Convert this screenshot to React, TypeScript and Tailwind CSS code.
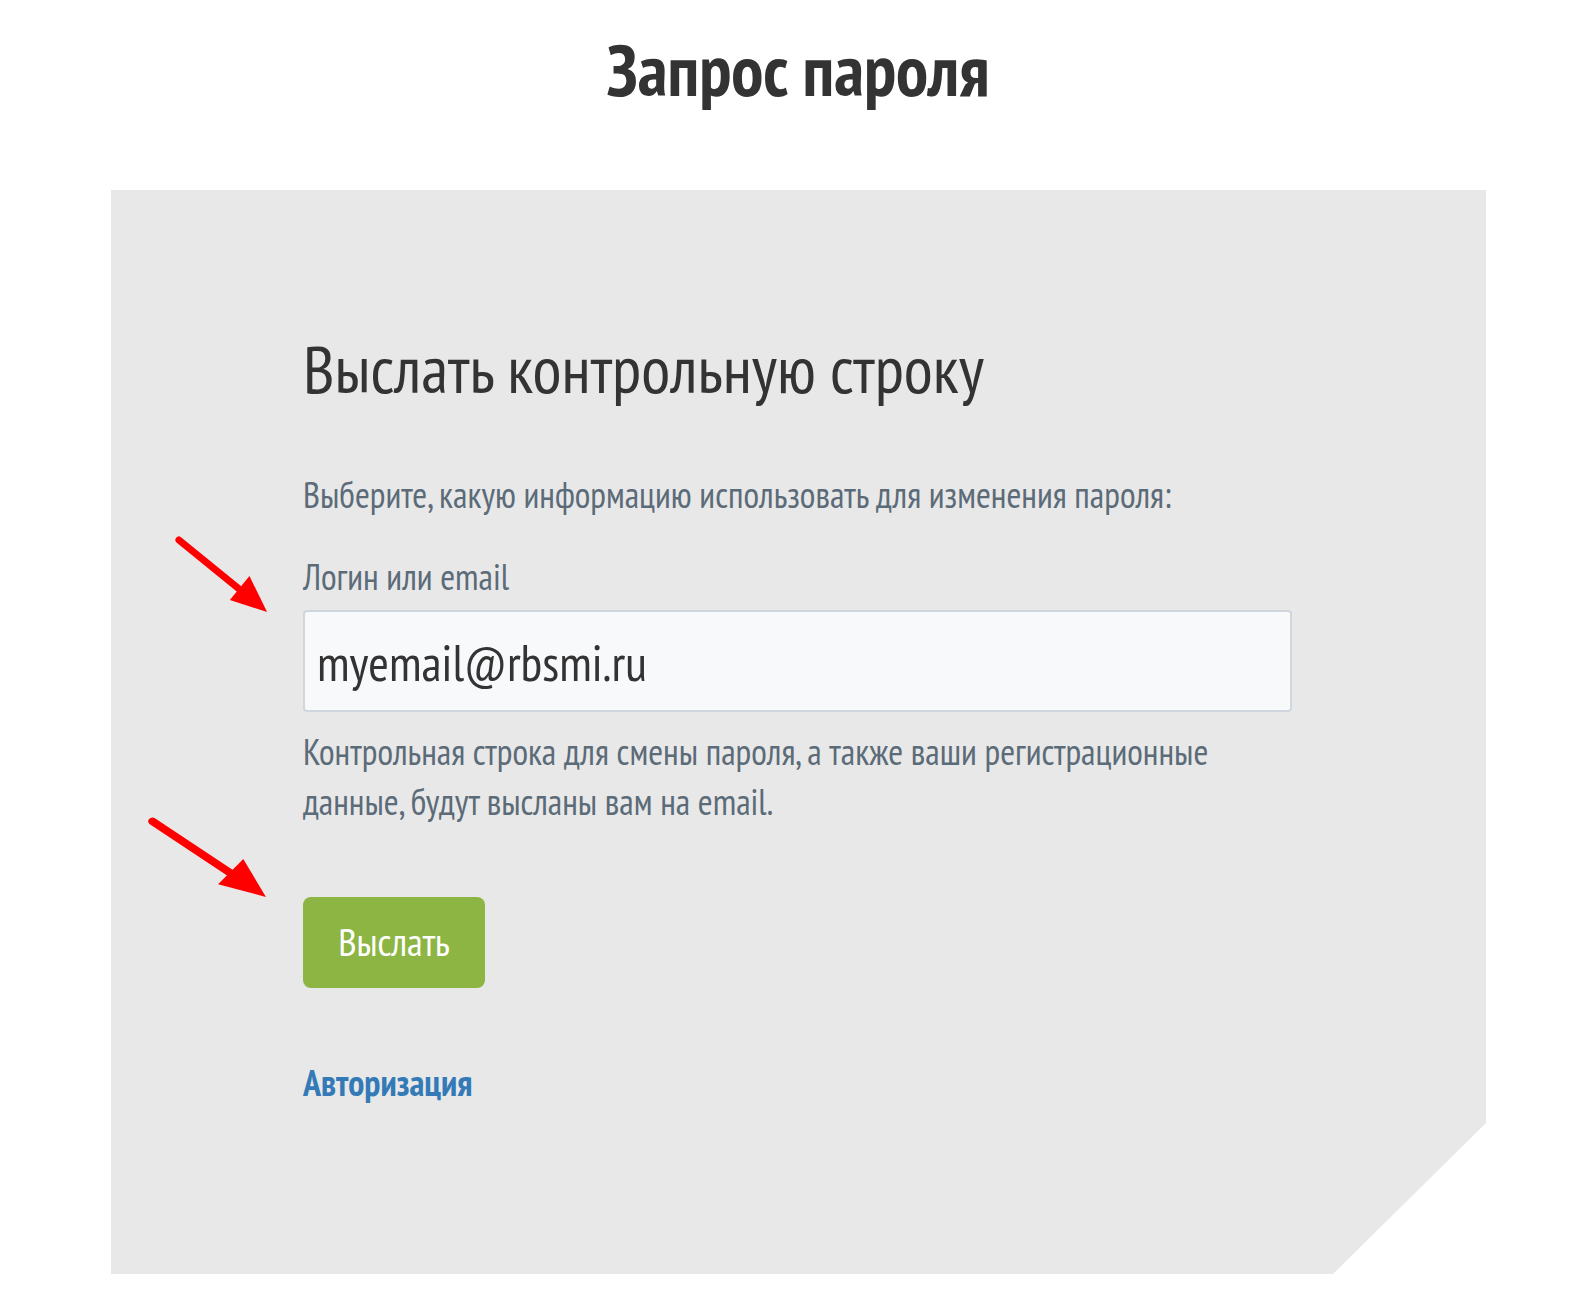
const narrow = 'font-["PT_Sans_Narrow","Liberation_Sans_Narrow","DejaVu_Sans_Condensed",sans-serif]';

const RedArrow = ({ className }: { className: string }) => (
  <svg className={className} viewBox="0 0 100 80" fill="none" preserveAspectRatio="none">
    <line x1="6" y1="6" x2="70" y2="57" stroke="#ff0000" strokeWidth="7" strokeLinecap="round" />
    <polygon points="96,78 58,66 78,42" fill="#ff0000" />
  </svg>
);

export default function App() {
  return (
    <div className={`min-h-[1311px] bg-white text-[#333] ${narrow}`}>
      <h1 className="pl-[16px] pt-[30px] text-center text-[72px] font-bold leading-[80px] text-[#333]">Запрос пароля</h1>

      <div className="relative ml-[111px] mt-[80px] h-[1084px] w-[1375px] bg-[#e8e8e8] [clip-path:polygon(0_0,100%_0,100%_933px,1222px_100%,0_100%)]">
        <RedArrow className="absolute left-[62px] top-[344px] h-[80px] w-[98px]" />
        <RedArrow className="absolute left-[34px] top-[625px] h-[84px] w-[126px]" />

        <div className="pl-[192px] pt-[138px]">
          <h2 className="text-[67px] font-normal leading-[80px] text-[#333]">Выслать контрольную строку</h2>

          <p className="mt-[62px] text-[36px] leading-[50px] text-[#5b6b78]">
            Выберите, какую информацию использовать для изменения пароля:
          </p>

          <label className="mt-[32px] block text-[36px] leading-[50px] text-[#5b6b78]">Логин или email</label>
          <div className="mt-[8px] flex h-[102px] w-[989px] items-center rounded-[4px] border-2 border-[#cfd6dd] bg-[#f7f9fb] px-[12px] pt-[2px] text-[50px] text-[#333]">
            myemail@rbsmi.ru
          </div>

          <p className="mt-[15px] w-[989px] text-[36px] leading-[50px] text-[#5b6b78]">
            Контрольная строка для смены пароля, а также ваши регистрационные данные, будут высланы вам на email.
          </p>

          <button
            type="button"
            className="mt-[70px] flex h-[91px] w-[182px] items-center justify-center rounded-[8px] bg-[#8db543] text-[39px] text-white"
          >
            Выслать
          </button>

          <a href="#" className="mt-[73px] block w-fit text-[36px] font-bold leading-[44px] text-[#337ab7]">
            Авторизация
          </a>
        </div>
      </div>
    </div>
  );
}
